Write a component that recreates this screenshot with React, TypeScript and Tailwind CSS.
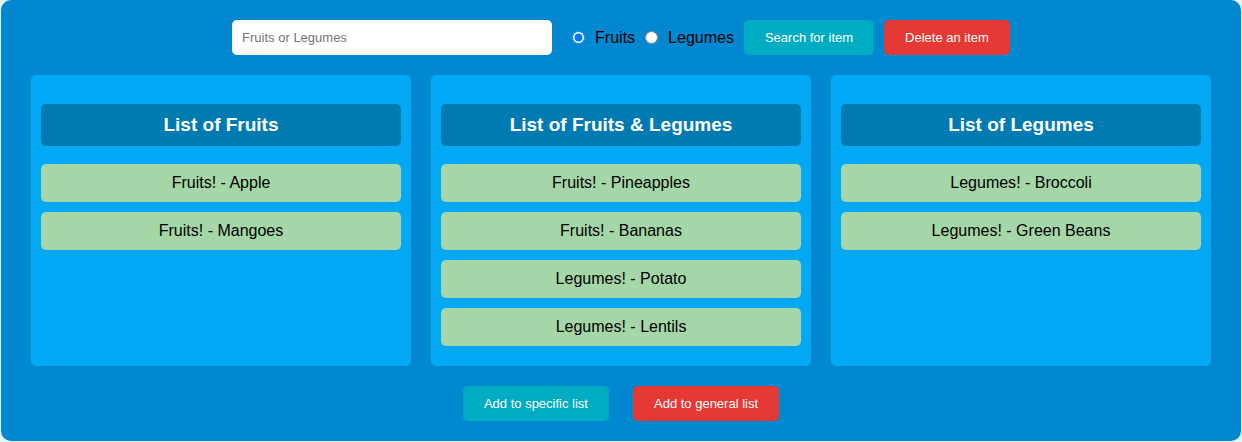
import { useState } from "react";
import type { ReactNode } from "react";

type Kind = "Fruits" | "Legumes";

interface Item {
  kind: Kind;
  name: string;
}

interface ItemList {
  title: string;
  items: Item[];
}

const lists: ItemList[] = [
  {
    title: "List of Fruits",
    items: [
      { kind: "Fruits", name: "Apple" },
      { kind: "Fruits", name: "Mangoes" },
    ],
  },
  {
    title: "List of Fruits & Legumes",
    items: [
      { kind: "Fruits", name: "Pineapples" },
      { kind: "Fruits", name: "Bananas" },
      { kind: "Legumes", name: "Potato" },
      { kind: "Legumes", name: "Lentils" },
    ],
  },
  {
    title: "List of Legumes",
    items: [
      { kind: "Legumes", name: "Broccoli" },
      { kind: "Legumes", name: "Green Beans" },
    ],
  },
];

const kinds: Kind[] = ["Fruits", "Legumes"];

function ActionButton({ tone, children }: { tone: "teal" | "red"; children: ReactNode }) {
  const color = tone === "teal" ? "bg-[#00acc1]" : "bg-[#e53935]";
  return (
    <button type="button" className={`cursor-pointer rounded-[5px] px-[21px] py-2.5 text-[13px] leading-[15px] text-white ${color}`}>
      {children}
    </button>
  );
}

function ListColumn({ title, items }: ItemList) {
  return (
    <section className="flex-1 rounded-[5px] bg-[#03a9f4] px-2.5 pt-[29px] pb-5 text-center">
      <h3 className="mb-[18px] rounded-[5px] bg-[#007bb2] py-2.5 text-[19px] leading-[22px] font-bold text-white">{title}</h3>
      <ul className="flex flex-col gap-2.5">
        {items.map((item) => (
          <li key={item.name} className="rounded-[5px] bg-[#a5d6a7] py-2.5 text-base leading-[18px]">
            {item.kind}! - {item.name}
          </li>
        ))}
      </ul>
    </section>
  );
}

export default function App() {
  const [kind, setKind] = useState<Kind>("Fruits");

  return (
    <div className="bg-[#e0f7fa] px-px pb-px font-['Liberation_Sans',Arial,sans-serif] text-black">
      <main className="flex flex-col gap-5 rounded-[10px] bg-[#0288d1] px-[30px] py-5">
        <form className="flex flex-wrap items-center justify-center gap-2.5" onSubmit={(e) => e.preventDefault()}>
          <input
            type="text"
            aria-label="Fruits or Legumes"
            placeholder="Fruits or Legumes"
            className="mr-2.5 w-80 rounded-[5px] bg-white p-2.5 text-[13px] leading-[15px] placeholder:text-[#757575]"
          />
          {kinds.map((k) => (
            <label key={k} className="flex items-center gap-2.5 text-base leading-[18px]">
              <input type="radio" name="kind" value={k} checked={kind === k} onChange={() => setKind(k)} className="size-[13px]" />
              {k}
            </label>
          ))}
          <ActionButton tone="teal">Search for item</ActionButton>
          <ActionButton tone="red">Delete an item</ActionButton>
        </form>
        <div className="flex gap-5">
          {lists.map((list) => (
            <ListColumn key={list.title} {...list} />
          ))}
        </div>
        <div className="flex flex-wrap justify-center gap-6">
          <ActionButton tone="teal">Add to specific list</ActionButton>
          <ActionButton tone="red">Add to general list</ActionButton>
        </div>
      </main>
    </div>
  );
}
